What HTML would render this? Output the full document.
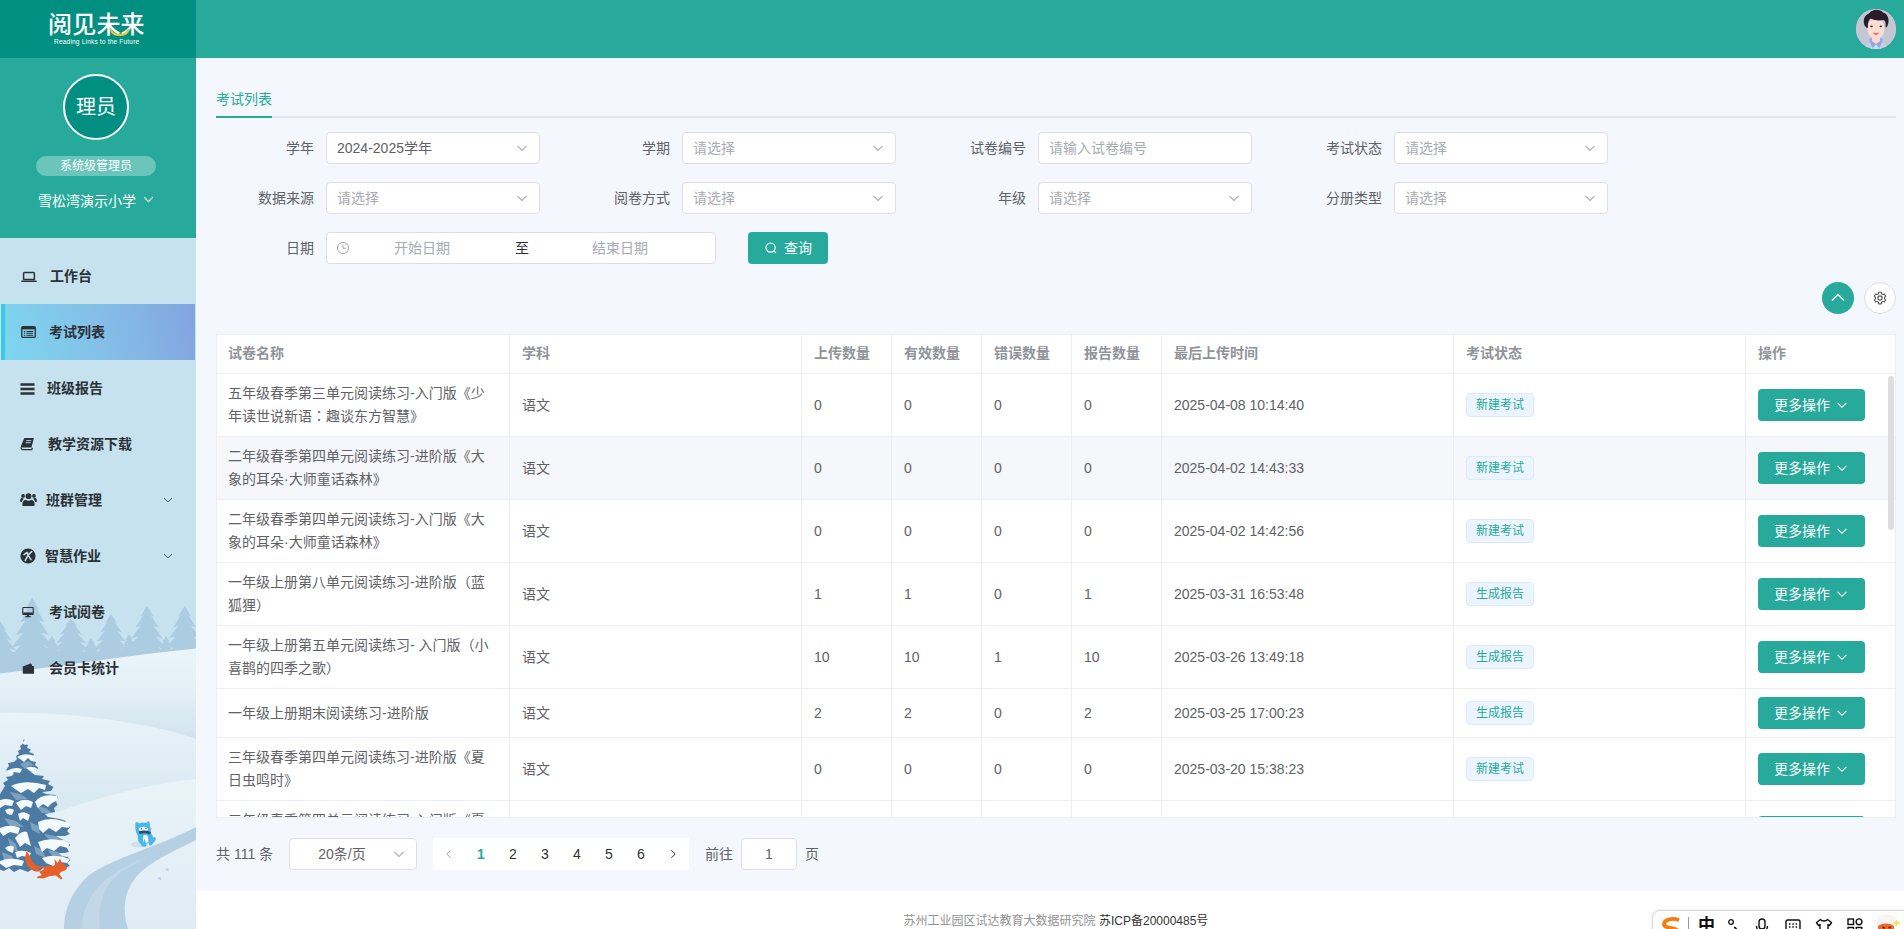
<!DOCTYPE html>
<html lang="zh-CN">
<head>
<meta charset="utf-8">
<title>考试列表</title>
<style>
*{box-sizing:border-box;margin:0;padding:0}
html,body{width:1904px;height:929px;overflow:hidden;background:#fff}
body{font-family:"Liberation Sans","Noto Sans CJK SC",sans-serif;font-size:14px;color:#606266;position:relative}
.abs{position:absolute}
/* header */
#hdr{position:absolute;left:0;top:0;width:1904px;height:58px;background:#27aa9b}
#logo{position:absolute;left:0;top:0;width:196px;height:58px;background:#018f81}
#avatar{position:absolute;left:1856px;top:9px;width:40px;height:40px;border-radius:50%;overflow:hidden;background:#c4c8d4}
/* sidebar */
#side{position:absolute;left:0;top:58px;width:196px;height:871px;background:#c5e2ee;overflow:hidden}
#prof{position:absolute;left:0;top:0;width:196px;height:180px;background:#27aa9b}
#circle{position:absolute;left:63px;top:16px;width:66px;height:66px;border-radius:50%;border:2px solid #fff;background:#018f81;color:#fff;font-size:20px;line-height:62px;text-align:center}
#badge{position:absolute;left:36px;top:98px;width:120px;height:20px;border-radius:10px;background:rgba(255,255,255,.32);color:#fff;font-size:12px;line-height:20px;text-align:center}
#school{position:absolute;left:0;top:132px;width:196px;height:22px;color:#fff;font-size:14px;line-height:22px;padding-left:38px;white-space:nowrap}
#menu{position:absolute;left:0;top:190px;width:196px}
.mi{position:relative;height:56px;line-height:56px;font-weight:bold;color:#2b3137;font-size:14px;white-space:nowrap}
.mi .ic{position:absolute;left:20px;top:20px;width:16px;height:16px}
.mi .tx{position:absolute;top:0}
.mi .ar{position:absolute;left:163px;top:23px;width:10px;height:10px}
.mi.on{background:linear-gradient(75deg,#7dd6ee 0%,#84bfe8 50%,#83a4e0 100%);border-left:4px solid #3cc8e4;width:194px;margin-left:1px}
.mi.on .ic{left:15px}
/* main */
#main{position:absolute;left:196px;top:58px;width:1708px;height:833px;background:#f4f7fe;border-bottom:1px solid #f9fbff;border-left:1px solid #effdfd;border-top:1px solid #effdfd}
#main>*{margin-left:-1px;margin-top:-1px}
#foot{position:absolute;left:196px;top:891px;width:1708px;height:38px;background:#fff}

#tabs{position:absolute;left:20px;top:20px;width:1680px;height:40px;border-bottom:2px solid #e4e7ed}
#tabs .tab{position:absolute;left:0;top:0;line-height:43px;font-size:14px;color:#27aa9b}
#tabs .bar{position:absolute;left:0;top:38px;width:56px;height:2px;background:#27aa9b}
.frow{position:absolute;left:20px;height:32px;white-space:nowrap}
.fi{position:absolute;top:0;height:32px;width:324px}
.frow .fi:nth-child(2){left:356px}.frow .fi:nth-child(3){left:712px}.frow .fi:nth-child(4){left:1068px}
.fi label{position:absolute;left:0;top:0;width:110px;padding-right:12px;text-align:right;line-height:32px;font-size:14px;color:#606266}
.inp{position:absolute;left:110px;top:0;width:214px;height:32px;border:1px solid #dcdfe6;border-radius:4px;background:#fff;line-height:30px;padding-left:10px;font-size:14px}
.inp .ph{color:#a8abb2}.inp .val{color:#606266}
.sa{position:absolute;right:10px;top:8px;width:14px;height:14px}
.clk{position:absolute;left:9px;top:8px;width:14px;height:14px}
.date span{position:absolute;top:0;color:#a8abb2}
.date .d1{left:67px}.date .dz{left:188px;color:#303133}.date .d2{left:265px}
.qbtn{position:absolute;left:532px;top:0;width:80px;height:32px;border-radius:4px;background:#27aa9b;color:#fff;line-height:32px;font-size:14px;padding-left:36px}
.qbtn svg{position:absolute;left:16px;top:9px;width:14px;height:14px}
#up{position:absolute;left:1626px;top:224px;width:32px;height:32px;border-radius:50%;background:#27aa9b}
#up svg{position:absolute;left:8px;top:8px;width:16px;height:16px}
#gear{position:absolute;left:1668px;top:224px;width:32px;height:32px;border-radius:50%;background:#fff;border:1px solid #dcdfe6}
#gear svg{position:absolute;left:7px;top:7px;width:16px;height:16px}
#tbl{position:absolute;left:20px;top:276px;width:1680px;height:484px;overflow:hidden;background:#fff;border-top:1px solid #ebeef5;border-bottom:1px solid #ebeef5}
#tbl:before{content:"";position:absolute;left:0;top:0;width:1px;height:100%;background:#ebeef5;z-index:2}
#tbl:after{content:"";position:absolute;right:0;top:0;width:1px;height:100%;background:#ebeef5;z-index:2}
#tbl table{border-collapse:separate;border-spacing:0;table-layout:fixed;width:1680px}
#tbl th,#tbl td{border-right:1px solid #ebeef5;border-bottom:1px solid #ebeef5;padding:8px 0;text-align:left;vertical-align:middle;font-size:14px}
#tbl th{color:#909399;font-weight:bold;background:#fff;padding:7px 0 8px}
#tbl td{color:#606266}
#tbl .c{padding:0 12px;line-height:23px;white-space:nowrap;overflow:hidden}
#tbl tr.hv td{background:#f5f7fa}
.tag{display:inline-block;height:24px;line-height:22px;padding:0 9px;font-size:12px;color:#27aa9b;background:#ecf5ff;border:1px solid #d9ecff;border-radius:4px;vertical-align:middle}
.btn{display:inline-block;position:relative;width:107px;height:32px;line-height:32px;border-radius:4px;background:#27aa9b;color:#fff;font-size:14px;padding-left:16px;vertical-align:middle}
.btn .cv{position:absolute;left:77px;top:9px;width:14px;height:14px}
.sb{position:absolute;left:1672px;top:41px;width:6px;height:154px;border-radius:3px;background:#dddee0}
#pg{position:absolute;left:20px;top:780px;height:32px;width:1000px;line-height:32px;font-size:14px;color:#606266}
#pg>*{position:absolute;top:0}
.tot{left:0}
.psz{left:73px;width:128px;height:32px;border:1px solid #dcdfe6;border-radius:4px;background:#fff;line-height:30px;text-align:center;padding-right:22px}
.pgr{left:217px;width:256px;height:32px;background:#fff}
.pgr b{float:left;width:32px;height:32px;text-align:center;font-weight:normal;color:#303133;font-size:14px;line-height:32px}
.pgr b.cur{color:#27aa9b;font-weight:bold}
.pgr b svg{width:12px;height:12px;margin-top:10px}
.go{left:489px}.gi{left:525px;width:56px;height:32px;border:1px solid #dcdfe6;border-radius:4px;background:#fff;line-height:30px;text-align:center}.ye{left:589px}

#art{position:absolute;left:0;top:180px}
#logo .lt{position:absolute;left:48px;top:10px;width:100px;height:30px;line-height:30px;font-size:24px;color:#fff;font-weight:500;letter-spacing:.2px;white-space:nowrap}
#logo .sm{position:absolute;left:110px;top:28.500px;width:20px;height:8px}
#logo .ls{position:absolute;left:54px;top:38px;width:90px;height:8px;line-height:8px;font-size:6.600px;color:#fff;white-space:nowrap;letter-spacing:.16px}
#school svg{position:absolute;left:143px;top:4px;width:11px;height:11px}
#foot{text-align:center;font-size:12px;line-height:18px;padding-top:21px;padding-left:12px;white-space:nowrap}
#foot .f1{color:#929292}#foot .f2{color:#333}
#ime{position:absolute;left:1652px;top:910px;width:260px;height:30px;border:1px solid #d8d8d8;border-radius:8px;background:#fff;box-shadow:0 0 3px rgba(0,0,0,.12)}
#ime>*{position:absolute}
#ime .sg{left:7px;top:6px;width:22px;height:16px}
#ime .sp{left:35px;top:6px;width:1px;height:16px;background:#999}
#ime .zh{left:45px;top:4px;font-size:17px;line-height:22px;color:#111;font-weight:bold}
#ime .i1{left:74.400px;top:7.300px;width:12px;height:14px}
#ime .i2{left:101.600px;top:6.700px;width:14px;height:16px}
#ime .i3{left:132px;top:7.500px;width:16px;height:14px}
#ime .i4{left:162px;top:7.400px;width:18px;height:14px}
#ime .i5{left:194px;top:7px;width:16px;height:16px}
#ime .i6{left:222px;top:4px;width:26px;height:16px}
.tc{font-family:"Liberation Sans","Noto Sans CJK TC",sans-serif}
</style>
</head>
<body>
<div id="hdr">
  <div id="logo"><div class="lt">阅见未来</div><svg class="sm" viewBox="0 0 20 8"><path d="M1 1C3 7.500 16 7.500 18.500 1" fill="none" stroke="#e9c93c" stroke-width="2.200" stroke-linecap="round"/></svg><div class="ls">Reading Links to the Future</div></div>
  <div id="avatar"><svg viewBox="0 0 40 40" width="40" height="40"><rect width="40" height="40" fill="#c3c7d4"/><path d="M8 40c1-5 5-7 12-7s11 2 12 7z" fill="#c9cde6"/><path d="M13 30.500l3.500 8.500 3.500-3 3.500 3 3.500-8.500-2.500-1.500h-9z" fill="#98a8e0"/><path d="M17.500 38.500l2.500-3 2.500 3 -1 1.500h-3z" fill="#bfe3ee"/><path d="M16 26h8v6l-4 3-4-3z" fill="#fbd9d0"/><ellipse cx="20" cy="19.500" rx="8.600" ry="10.500" fill="#fcddd5"/><path d="M9.500 18C6 13 8 6 13 4.500 16 0 24-.5 27 3.500c5 1 7 8 4.500 13-1 2-1.500 3-2 1 .5-3 0-5-1.500-6.500-4 1-10 .5-13.500-1.500-2 2-3 5-2.500 8.500-.5 2-1.500 1-2.500-1z" fill="#2a1b2b"/><ellipse cx="15.500" cy="17.300" rx="1.300" ry=".900" fill="#3a2a2a"/><ellipse cx="24.800" cy="17.300" rx="1.300" ry=".900" fill="#3a2a2a"/><path d="M17 23.500c2 .600 4 .600 6 0-.600 1.800-1.800 2.500-3 2.500s-2.400-.700-3-2.500z" fill="#e0707c"/></svg></div>
</div>
<div id="side">
  <div id="prof">
    <div id="circle">理员</div>
    <div id="badge">系统级管理员</div>
    <div id="school">雪松湾演示小学<svg viewBox="0 0 12 12"><path d="M1.500 3.800 6 8.300 10.500 3.800" fill="none" stroke="#fff" stroke-width="1.200"/></svg></div>
  </div>
  <!--ART--><svg id="art" viewBox="0 238 196 691" width="196" height="691">
<defs>
<linearGradient id="g1" gradientUnits="userSpaceOnUse" x1="0" y1="650" x2="0" y2="742"><stop offset="0" stop-color="#ebf5fa"/><stop offset=".45" stop-color="#e3eff6"/><stop offset="1" stop-color="#cfe3ed"/></linearGradient>
<linearGradient id="g2" gradientUnits="userSpaceOnUse" x1="0" y1="714" x2="0" y2="800"><stop offset="0" stop-color="#e9f3f9"/><stop offset="1" stop-color="#d9e9f2"/></linearGradient>
<linearGradient id="g3" gradientUnits="userSpaceOnUse" x1="0" y1="780" x2="0" y2="929"><stop offset="0" stop-color="#e9f3f8"/><stop offset="1" stop-color="#dfecf4"/></linearGradient>
</defs>
<rect x="0" y="238" width="196" height="691" fill="#c5e2ee"/>
<path d="M32.3 597.5L39.2 610L36.1 607.8L44.3 622.5L38.9 620.2L48.9 635L41.4 632.8L53.2 647.5L43.8 645.2L57.3 660L57.3 674L7.3 674L7.3 660L20.8 645.2L11.4 647.5L23.2 632.8L15.7 635L25.7 620.2L20.3 622.5L28.5 607.8L25.4 610ZM71 618L77.3 626.4L74.5 624.9L82.1 634.8L77.1 633.3L86.3 643.2L79.4 641.7L90.2 651.6L81.6 650.1L94 660L94 674L48 674L48 660L60.4 650.1L51.8 651.6L62.6 641.7L55.7 643.2L64.9 633.3L59.9 634.8L67.5 624.9L64.7 626.4ZM111 614L117.1 623.2L114.3 621.5L121.6 632.4L116.8 630.7L125.6 641.6L119 639.9L129.4 650.8L121.1 649.1L133 660L133 674L89 674L89 660L100.9 649.1L92.6 650.8L103 639.9L96.4 641.6L105.2 630.7L100.4 632.4L107.7 621.5L104.9 623.2ZM147 606L153.6 616.8L150.6 614.9L158.5 627.6L153.3 625.7L162.9 638.4L155.8 636.5L167.1 649.2L158 647.3L171 660L171 674L123 674L123 660L136 647.3L126.9 649.2L138.2 636.5L131.1 638.4L140.7 625.7L135.5 627.6L143.4 614.9L140.4 616.8ZM184.6 606L191.2 616.8L188.2 614.9L196.1 627.6L190.9 625.7L200.5 638.4L193.4 636.5L204.7 649.2L195.6 647.3L208.6 660L208.6 674L160.6 674L160.6 660L173.6 647.3L164.5 649.2L175.8 636.5L168.7 638.4L178.3 625.7L173.1 627.6L181 614.9L178 616.8ZM0 621L6.6 630.8L3.6 629L11.5 640.5L6.3 638.7L15.9 650.2L8.7 648.5L20 660L20 674L-20 674L-20 660L-8.7 648.5L-15.9 650.2L-6.3 638.7L-11.5 640.5L-3.6 629L-6.6 630.8ZM52 636L56 642L54.2 640.9L58.9 648L55.8 646.9L61.5 654L57.2 652.9L64 660L64 674L40 674L40 660L46.8 652.9L42.5 654L48.2 646.9L45.1 648L49.8 640.9L48 642ZM91 638L94.6 643.5L93 642.5L97.3 649L94.5 648L99.7 654.5L95.8 653.5L102 660L102 674L80 674L80 660L86.2 653.5L82.3 654.5L87.5 648L84.7 649L89 642.5L87.4 643.5ZM129 634L132.6 640.5L131 639.3L135.3 647L132.5 645.8L137.7 653.5L133.8 652.3L140 660L140 674L118 674L118 660L124.2 652.3L120.3 653.5L125.5 645.8L122.7 647L127 639.3L125.4 640.5ZM166 636L169.6 642L168 640.9L172.3 648L169.5 646.9L174.7 654L170.8 652.9L177 660L177 674L155 674L155 660L161.2 652.9L157.3 654L162.5 646.9L159.7 648L164 640.9L162.4 642ZM0 652H196V680H0Z" fill="#abcce1"/>
<path d="M0 673.400C65 666 130 655 196 648.500V929H0Z" fill="url(#g1)"/>
<path d="M0 713C70 711 150 723 196 739V929H0Z" fill="url(#g2)"/>
<path d="M196 779C150 784 100 796 40 818L0 832V929H196Z" fill="url(#g3)"/>
<path d="M64 929C64 912 70 893 88 876C112 858 160 846 196 827V840C170 853 145 864 134 880C124 893 122 910 128 929Z" fill="#b6d0e3"/>
<path d="M82 929C82 910 90 892 108 878C120 869 135 862 146 858C128 866 116 874 108 886C100 898 98 914 100 929Z" fill="#c2d8e8"/>
<path d="M157 878.500l3.500-2 1 4zM164.500 869.500l4-1.500 0 3.500z" fill="#bdd4e4"/>
<path d="M24 738.5L25.5 744L28 745L27 748L31 749.5L29 752L34 754L33 757L28 758L31 761L36 762L35 765L38.5 768L36 771L30 771.5L35 775L44 776L42 779L50 781L48 784L53.5 787L51 791L42 792L46 794L55 795L58 797L56 801L57.5 805L54 808L55 812L45 814L48 817L60 819L66 821L64 824L70.5 827L67 831L70 834L65 836L53 836L58 840L68 842L70.5 845L67 848L69 852L64 853L53 853L60 856L68 857L70.5 860L67 863L70 866L64 868L58 867L50 870L44 867L40 871L34 868L28 872L20 869L14 872L9 868L4 871L-4 868L-4 800L2.6 790L5 786L3 783L8 780L6 777L12 776L14 773L6 770L9 766L8 763L14 762L17 759L16 756L19 754L18 751L21 749L20 746L22.5 744Z" fill="#4b7ba3"/>
<path d="M20 764l8-3 6 4-5 1-4 3zM10 792l10 2 8 5-12 1zM36 806l10 2 6 5-10 0zM4 818l12 3 8 6-14-1zM30 822l8 4 2 8-8-4zM44 834l12 2 8 4-14 1zM8 838l8 6 2 8-8-5zM34 846l8 4 4 8-10-4zM48 850l10 2 4 4-10 0zM2 852l10 4 4 6-12-2z" fill="#7da2c1"/>
<path d="M22 743l3-3 2 4-2 1zM17 757Q24 752 35 756L33 760 28 758 24 762 20 759ZM7 771Q14 766 22 769L20 773 14 772 10 775ZM26 768Q32 765 38 769L35 772 30 771ZM11 786Q25 779 46 785L45 790 39 788 34 793 28 789 21 793 15 789ZM35 802Q41 793 57 796L58 800 52 803 48 807 43 804 38 808ZM16 803Q24 797 33 802L31 808 26 806 21 810ZM-2 801Q6 797 14 801L12 806 5 805 0 808ZM5 810Q10 807 14 810L12 815 7 814ZM18 814Q24 810 30 815L28 821 23 818 20 821ZM38 822Q52 815 70 824L69 828 62 827 56 832 49 828 43 833 39 829ZM-2 829Q10 823 20 828L18 834 10 832 3 836ZM15 838Q22 830 27 832L31 846 25 843 20 847ZM5 848Q10 844 14 847L13 853 8 851ZM38 842Q52 836 70 843L68 848 60 846 54 851 47 848 42 852ZM15 852Q23 849 31 853L29 857 22 856 17 858ZM42 858Q55 853 70 859L67 863 60 862 53 866 46 863ZM-2 862Q10 856 24 861L22 866 14 865 6 868Z" fill="#f4f9fc"/>
<path d="M26.500 851.500C24 858 25.500 866 32 870C36 872.500 41 872 44 869L42 866C38 867 34 865 32 861C30.500 858 29.500 854 26.500 851.500ZM39 869C43 865.500 50 865 55 866.500L54.500 859 57.500 863 60 858.500 62 863.500C65 864.500 67 866.500 67 868.500L65 870.500 61.500 871.500 59 874 62.500 878.500 61 879.500 56 875.500 50 876 43 878.500 37 878 37.500 876.500 42 875C40 873.500 39 871.500 39 869Z" fill="#e65f29"/>
<ellipse cx="139.400" cy="844.600" rx="8.500" ry="3" fill="#cfe0ec"/><path d="M135.300 824.500Q135 821.500 137.500 822.300L139.500 823.500Q143 821.800 146 823L148 821.300Q149.800 821 149.800 823.500L150 826Q151.500 829 150.500 832.500Q152.500 834.500 153 837.500Q154.500 836.500 155.500 837.500Q156.500 839 155 841L152.500 844Q151 846 149.500 845.500L148.500 843L146.500 843.500L146 846.500L142.500 846.500Q141 846 141 844Q137.500 842.500 138 836Q135 832 135.300 824.500Z" fill="#45b8e8"/><ellipse cx="143.500" cy="829.300" rx="4.600" ry="2.500" fill="#e6f4fa"/><path d="M138.800 831.500Q144 829.500 151 832L150 834.500Q144.500 832.300 139.500 834Z" fill="#2b4f6e"/><path d="M143 836Q145.500 833.500 148 836.500L148.500 842L146 843L144.500 838.500L143.500 843Z" fill="#fff"/><circle cx="141.500" cy="828.600" r=".600" fill="#2b4f6e"/><circle cx="146" cy="828.400" r=".600" fill="#2b4f6e"/><circle cx="151.300" cy="828.600" r="1" fill="#f3b9a6"/>
</svg><!--/ART-->
<div id="menu">
<div class="mi"><svg class="ic" viewBox="0 0 16 16" style="left:21px;width:16px;top:21px"><rect x="2.6" y="3.4" width="10.8" height="7.2" rx="0.8" fill="none" stroke="#2b3137" stroke-width="1.5"/><rect x="0.2" y="11.6" width="15.6" height="1.5" rx=".7" fill="#2b3137"/></svg><span class="tx" style="left:50px">工作台</span></div>
<div class="mi on"><svg class="ic" viewBox="0 0 16 16" style="left:16px;width:15px"><rect x="0.8" y="2.2" width="14.4" height="11.6" rx="1.4" fill="none" stroke="#2b3137" stroke-width="1.4"/><rect x="0.8" y="2.2" width="14.4" height="3" fill="#2b3137"/><path d="M3 7.4h1.6M3 9.4h1.6M3 11.4h1.6" stroke="#2b3137" stroke-width="1.1"/><path d="M5.8 7.4H13M5.8 9.4H13M5.8 11.4H13" stroke="#2b3137" stroke-width="1.1"/></svg><span class="tx" style="left:44px">考试列表</span></div>
<div class="mi"><svg class="ic" viewBox="0 0 16 16" style="left:20px;width:15px;top:21px"><path d="M0.5 3.2h15M0.5 8h15M0.5 12.8h15" stroke="#2b3137" stroke-width="2.5"/></svg><span class="tx" style="left:47px">班级报告</span></div>
<div class="mi"><svg class="ic" viewBox="0 0 16 16" style="left:20px;width:15px"><path d="M4.6 1.6h10.2l-2.6 10H2.4c-1 0-1.6-.8-1.3-1.8z" fill="#2b3137"/><path d="M1.2 11.4c-.3 1.5.4 2.6 1.8 2.6h9.600l.6-2" fill="none" stroke="#2b3137" stroke-width="1.3"/><path d="M6.6 4.4h5.400M6 6.600h5.400" stroke="#c5e2ee" stroke-width="1"/></svg><span class="tx" style="left:48px">教学资源下载</span></div>
<div class="mi"><svg class="ic" viewBox="0 0 18 16" style="left:20px;width:17px;height:15px"><circle cx="9" cy="4.4" r="3.1" fill="#2b3137"/><path d="M3.800 15c-.9 0-1.400-.5-1.400-1.400 0-3 1.400-5.400 3.600-5.400.8.700 1.800 1.200 3 1.200s2.200-.5 3-1.200c2.200 0 3.600 2.400 3.600 5.400 0 .9-.5 1.400-1.400 1.400z" fill="#2b3137"/><circle cx="3.200" cy="4.200" r="2" fill="#2b3137"/><circle cx="14.800" cy="4.200" r="2" fill="#2b3137"/><path d="M0 9.600c0-2 .9-3.400 2.400-3.400.5.400 1 .600 1.600.700-1 .900-1.700 2.200-2 3.700H1c-.7 0-1-.4-1-1zM18 9.600c0-2-.9-3.400-2.400-3.400-.5.400-1 .600-1.600.700 1 .900 1.700 2.200 2 3.700H17c.7 0 1-.4 1-1z" fill="#2b3137"/></svg><span class="tx" style="left:46px">班群管理</span><svg class="ar" viewBox="0 0 12 12"><path d="M1.200 3.600 6 8.400 10.800 3.600" fill="none" stroke="#40484f" stroke-width="1.100"/></svg></div>
<div class="mi"><svg class="ic" viewBox="0 0 16 16" style="left:20px;width:16px;height:16px;top:20px"><circle cx="8" cy="8" r="7.600" fill="#2b3137"/><path d="M5.200 12.600 8 7.200 11.600 3.600M8 7.200 11 11.600M4 6.600 7.200 4.400 8 7.200" fill="none" stroke="#c5e2ee" stroke-width="1.500" stroke-linecap="round" stroke-linejoin="round"/></svg><span class="tx" style="left:45px">智慧作业</span><svg class="ar" viewBox="0 0 12 12"><path d="M1.200 3.600 6 8.400 10.800 3.600" fill="none" stroke="#40484f" stroke-width="1.100"/></svg></div>
<div class="mi"><svg class="ic" viewBox="0 0 16 16" style="left:22px;width:12px;height:12px;top:22px"><rect x="1" y="2" width="14" height="9.400" rx="1" fill="none" stroke="#2b3137" stroke-width="1.500"/><rect x="1.500" y="8.600" width="13" height="2.600" fill="#2b3137"/><path d="M4.400 14.200h7.200" stroke="#2b3137" stroke-width="1.600"/><path d="M6.600 11.600h2.800v2H6.600z" fill="#2b3137"/></svg><span class="tx" style="left:49px">考试阅卷</span></div>
<div class="mi"><svg class="ic" viewBox="0 0 16 16" style="left:22px;width:12px;height:13px;top:22px"><path d="M1 5.200 11.400 1.400c.6-.2 1.200.2 1.400.8l.8 2.600H15c.600 0 1 .4 1 1v8.200c0 .600-.4 1-1 1H2c-.600 0-1-.4-1-1z" fill="#2b3137"/></svg><span class="tx" style="left:49px">会员卡统计</span></div>
</div>
</div>
<div id="main">
<div id="tabs"><span class="tab">考试列表</span><i class="bar"></i></div>
<div class="frow" style="top:74px"><div class="fi"><label>学年</label><div class="inp"><span class="val">2024-2025学年</span><svg class="sa" viewBox="0 0 14 14"><path d="M2.4 4.8 L7 9.4 L11.6 4.8" fill="none" stroke="#a8abb2" stroke-width="1.1"/></svg></div></div><div class="fi"><label>学期</label><div class="inp"><span class="ph">请选择</span><svg class="sa" viewBox="0 0 14 14"><path d="M2.4 4.8 L7 9.4 L11.6 4.8" fill="none" stroke="#a8abb2" stroke-width="1.1"/></svg></div></div><div class="fi"><label>试卷编号</label><div class="inp"><span class="ph">请输入试卷编号</span></div></div><div class="fi"><label>考试状态</label><div class="inp"><span class="ph">请选择</span><svg class="sa" viewBox="0 0 14 14"><path d="M2.4 4.8 L7 9.4 L11.6 4.8" fill="none" stroke="#a8abb2" stroke-width="1.1"/></svg></div></div></div>
<div class="frow" style="top:124px"><div class="fi"><label>数据来源</label><div class="inp"><span class="ph">请选择</span><svg class="sa" viewBox="0 0 14 14"><path d="M2.4 4.8 L7 9.4 L11.6 4.8" fill="none" stroke="#a8abb2" stroke-width="1.1"/></svg></div></div><div class="fi"><label>阅卷方式</label><div class="inp"><span class="ph">请选择</span><svg class="sa" viewBox="0 0 14 14"><path d="M2.4 4.8 L7 9.4 L11.6 4.8" fill="none" stroke="#a8abb2" stroke-width="1.1"/></svg></div></div><div class="fi"><label>年级</label><div class="inp"><span class="ph">请选择</span><svg class="sa" viewBox="0 0 14 14"><path d="M2.4 4.8 L7 9.4 L11.6 4.8" fill="none" stroke="#a8abb2" stroke-width="1.1"/></svg></div></div><div class="fi"><label>分册类型</label><div class="inp"><span class="ph">请选择</span><svg class="sa" viewBox="0 0 14 14"><path d="M2.4 4.8 L7 9.4 L11.6 4.8" fill="none" stroke="#a8abb2" stroke-width="1.1"/></svg></div></div></div>
<div class="frow" style="top:174px"><div class="fi" style="width:532px"><label>日期</label><div class="inp date" style="width:390px"><svg class="clk" viewBox="0 0 14 14"><circle cx="7" cy="7" r="5.6" fill="none" stroke="#a8abb2" stroke-width="1"/><path d="M7 3.6 V7.3 H10" fill="none" stroke="#a8abb2" stroke-width="1"/></svg><span class="d1">开始日期</span><span class="dz">至</span><span class="d2">结束日期</span></div></div><div class="qbtn"><svg viewBox="0 0 14 14"><circle cx="6.6" cy="6.6" r="4.6" fill="none" stroke="#fff" stroke-width="1.2"/><path d="M10 10 L11.6 11.6" stroke="#fff" stroke-width="1.2" stroke-linecap="round"/></svg>查询</div></div>
<div id="up"><svg viewBox="0 0 16 16"><path d="M2 10.600 L8 4.600 L14 10.600" fill="none" stroke="#fff" stroke-width="1.400"/></svg></div>
<div id="gear"><svg viewBox="0 0 16 16"><circle cx="8" cy="8" r="2.100" fill="none" stroke="#55585e" stroke-width="1.150"/><path d="M6.7 2.2h2.6l.4 1.7 1.1.6 1.6-.5 1.3 2.2-1.2 1.2v1.2l1.2 1.2-1.3 2.2-1.6-.5-1.1.6-.4 1.7H6.7l-.4-1.7-1.1-.6-1.6.5-1.3-2.2 1.2-1.2V7.4L2.3 6.2l1.3-2.2 1.6.5 1.1-.6z" fill="none" stroke="#55585e" stroke-width="1.150" stroke-linejoin="round"/></svg></div>
<div id="tbl">
<table>
<colgroup><col style="width:294px"><col style="width:292px"><col style="width:90px"><col style="width:90px"><col style="width:90px"><col style="width:90px"><col style="width:292px"><col style="width:292px"><col style="width:150px"></colgroup>
<thead><tr><th><div class="c">试卷名称</div></th><th><div class="c">学科</div></th><th><div class="c">上传数量</div></th><th><div class="c">有效数量</div></th><th><div class="c">错误数量</div></th><th><div class="c">报告数量</div></th><th><div class="c">最后上传时间</div></th><th><div class="c">考试状态</div></th><th><div class="c">操作</div></th></tr></thead>
<tbody>
<tr class="r"><td><div class="c">五年级春季第三单元阅读练习-入门版《少<br>年读世说新语<span class="tc" lang="zh-TW">：</span>趣谈东方智慧》</div></td><td><div class="c">语文</div></td><td><div class="c">0</div></td><td><div class="c">0</div></td><td><div class="c">0</div></td><td><div class="c">0</div></td><td><div class="c">2025-04-08 10:14:40</div></td><td><div class="c"><span class="tag">新建考试</span></div></td><td><div class="c"><span class="btn">更多操作<svg class="cv" viewBox="0 0 14 14"><path d="M2.6 4.9 L7 9.3 L11.4 4.9" fill="none" stroke="currentColor" stroke-width="1.15"/></svg></span></div></td></tr>
<tr class="r hv"><td><div class="c">二年级春季第四单元阅读练习-进阶版《大<br>象的耳朵·大师童话森林》</div></td><td><div class="c">语文</div></td><td><div class="c">0</div></td><td><div class="c">0</div></td><td><div class="c">0</div></td><td><div class="c">0</div></td><td><div class="c">2025-04-02 14:43:33</div></td><td><div class="c"><span class="tag">新建考试</span></div></td><td><div class="c"><span class="btn">更多操作<svg class="cv" viewBox="0 0 14 14"><path d="M2.6 4.9 L7 9.3 L11.4 4.9" fill="none" stroke="currentColor" stroke-width="1.15"/></svg></span></div></td></tr>
<tr class="r"><td><div class="c">二年级春季第四单元阅读练习-入门版《大<br>象的耳朵·大师童话森林》</div></td><td><div class="c">语文</div></td><td><div class="c">0</div></td><td><div class="c">0</div></td><td><div class="c">0</div></td><td><div class="c">0</div></td><td><div class="c">2025-04-02 14:42:56</div></td><td><div class="c"><span class="tag">新建考试</span></div></td><td><div class="c"><span class="btn">更多操作<svg class="cv" viewBox="0 0 14 14"><path d="M2.6 4.9 L7 9.3 L11.4 4.9" fill="none" stroke="currentColor" stroke-width="1.15"/></svg></span></div></td></tr>
<tr class="r"><td><div class="c">一年级上册第八单元阅读练习-进阶版（蓝<br>狐狸）</div></td><td><div class="c">语文</div></td><td><div class="c">1</div></td><td><div class="c">1</div></td><td><div class="c">0</div></td><td><div class="c">1</div></td><td><div class="c">2025-03-31 16:53:48</div></td><td><div class="c"><span class="tag">生成报告</span></div></td><td><div class="c"><span class="btn">更多操作<svg class="cv" viewBox="0 0 14 14"><path d="M2.6 4.9 L7 9.3 L11.4 4.9" fill="none" stroke="currentColor" stroke-width="1.15"/></svg></span></div></td></tr>
<tr class="r"><td><div class="c">一年级上册第五单元阅读练习- 入门版（小<br>喜鹊的四季之歌）</div></td><td><div class="c">语文</div></td><td><div class="c">10</div></td><td><div class="c">10</div></td><td><div class="c">1</div></td><td><div class="c">10</div></td><td><div class="c">2025-03-26 13:49:18</div></td><td><div class="c"><span class="tag">生成报告</span></div></td><td><div class="c"><span class="btn">更多操作<svg class="cv" viewBox="0 0 14 14"><path d="M2.6 4.9 L7 9.3 L11.4 4.9" fill="none" stroke="currentColor" stroke-width="1.15"/></svg></span></div></td></tr>
<tr class="r"><td><div class="c">一年级上册期末阅读练习-进阶版</div></td><td><div class="c">语文</div></td><td><div class="c">2</div></td><td><div class="c">2</div></td><td><div class="c">0</div></td><td><div class="c">2</div></td><td><div class="c">2025-03-25 17:00:23</div></td><td><div class="c"><span class="tag">生成报告</span></div></td><td><div class="c"><span class="btn">更多操作<svg class="cv" viewBox="0 0 14 14"><path d="M2.6 4.9 L7 9.3 L11.4 4.9" fill="none" stroke="currentColor" stroke-width="1.15"/></svg></span></div></td></tr>
<tr class="r"><td><div class="c">三年级春季第四单元阅读练习-进阶版《夏<br>日虫鸣时》</div></td><td><div class="c">语文</div></td><td><div class="c">0</div></td><td><div class="c">0</div></td><td><div class="c">0</div></td><td><div class="c">0</div></td><td><div class="c">2025-03-20 15:38:23</div></td><td><div class="c"><span class="tag">新建考试</span></div></td><td><div class="c"><span class="btn">更多操作<svg class="cv" viewBox="0 0 14 14"><path d="M2.6 4.9 L7 9.3 L11.4 4.9" fill="none" stroke="currentColor" stroke-width="1.15"/></svg></span></div></td></tr>
<tr class="r"><td><div class="c">三年级春季第四单元阅读练习-入门版《夏<br>日虫鸣时》</div></td><td><div class="c">语文</div></td><td><div class="c">0</div></td><td><div class="c">0</div></td><td><div class="c">0</div></td><td><div class="c">0</div></td><td><div class="c">2025-03-20 15:36:10</div></td><td><div class="c"><span class="tag">新建考试</span></div></td><td><div class="c"><span class="btn">更多操作<svg class="cv" viewBox="0 0 14 14"><path d="M2.6 4.9 L7 9.3 L11.4 4.9" fill="none" stroke="currentColor" stroke-width="1.15"/></svg></span></div></td></tr>
</tbody>
</table>
<i class="sb"></i>
</div>
<div id="pg">
<span class="tot">共 111 条</span>
<div class="psz"><span>20条/页</span><svg class="sa" viewBox="0 0 14 14"><path d="M2.4 4.8 L7 9.4 L11.6 4.8" fill="none" stroke="#a8abb2" stroke-width="1.1"/></svg></div>
<div class="pgr"><b class="pv"><svg viewBox="0 0 12 12"><path d="M7.6 2.2 L3.8 6 L7.6 9.8" fill="none" stroke="#a8abb2" stroke-width="1"/></svg></b><b class="cur">1</b><b>2</b><b>3</b><b>4</b><b>5</b><b>6</b><b class="nx"><svg viewBox="0 0 12 12"><path d="M4.4 2.2 L8.2 6 L4.4 9.8" fill="none" stroke="#303133" stroke-width="1"/></svg></b></div>
<span class="go">前往</span><div class="gi">1</div><span class="ye">页</span>
</div>
</div>
<div id="foot"><span class="f1">苏州工业园区试达教育大数据研究院</span> <span class="f2">苏ICP备20000485号</span></div>
<div id="ime"><svg class="sg" viewBox="0 0 22 16"><path d="M19 3.200C13 .500 4 2.500 4 7.500c0 4.500 14 2 14 8 0 4-10 4-15 1" fill="none" stroke="#f97a0e" stroke-width="3.800" stroke-linecap="butt"/></svg><i class="sp"></i><span class="zh">中</span><svg class="i1" viewBox="0 0 12 14"><circle cx="4" cy="4" r="2.300" fill="none" stroke="#111" stroke-width="1.300"/><path d="M7 9.500c2 0 3 1.500 2 4" fill="none" stroke="#111" stroke-width="1.500"/></svg><svg class="i2" viewBox="0 0 14 16"><rect x="4" y="1" width="6" height="10" rx="3" fill="none" stroke="#111" stroke-width="1.400"/><path d="M1.500 8c0 7 11 7 11 0" fill="none" stroke="#111" stroke-width="1.400"/></svg><svg class="i3" viewBox="0 0 16 14"><rect x="1" y="1" width="14" height="12" rx="1.500" fill="none" stroke="#111" stroke-width="1.400"/><path d="M4 5h1.500M7.300 5h1.500M10.600 5h1.500M4 8h1.500M7.300 8h1.500M10.600 8h1.500" stroke="#111" stroke-width="1.300"/></svg><svg class="i4" viewBox="0 0 18 14"><path d="M5.500 1.500 1.500 4.500 3.500 7.500 5 6.500V14h8V6.500l1.500 1 2-3-4-3c-1 2-6 2-7 0z" fill="none" stroke="#111" stroke-width="1.400" stroke-linejoin="round"/></svg><svg class="i5" viewBox="0 0 16 16"><rect x="1" y="1" width="5.500" height="5.500" fill="none" stroke="#111" stroke-width="1.400"/><circle cx="12" cy="3.800" r="2.900" fill="none" stroke="#111" stroke-width="1.400"/><rect x="1" y="9.500" width="5.500" height="5.500" fill="none" stroke="#111" stroke-width="1.400"/><rect x="9.300" y="9.500" width="5.500" height="5.500" fill="none" stroke="#111" stroke-width="1.400"/></svg><svg class="i6" viewBox="0 0 26 16"><path d="M3 10c-2-4 0-8 4-8 1-2 5-2.500 7-1 3-1 6 1 6 4 1 2 0 4-1 5z" fill="#f6f6f6" stroke="#e6e6e6" stroke-width=".500"/><path d="M3 11c3-3.500 13-3.500 16 0l0 5H3z" fill="#ee6a24"/><path d="M7 11.500l3 .500-1 2.500zM13 12l3-.500-1 2.500z" fill="#3a1a10"/><path d="M21.500 4l1.200 2.800 2.800 1.200-2.800 1.200-1.200 2.800-1.200-2.800-2.800-1.200 2.800-1.200z" fill="#f8de5a"/></svg></div>
</body>
</html>
